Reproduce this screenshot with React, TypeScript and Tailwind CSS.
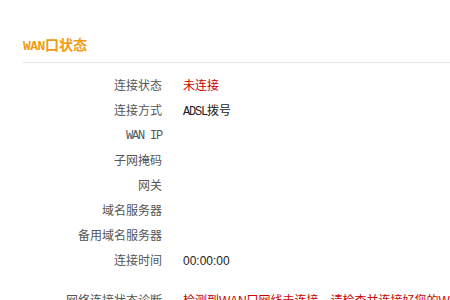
const rows: { label: string; value?: string; tone?: "red" | "dark"; monoLabel?: boolean }[] = [
  { label: "连接状态", value: "未连接", tone: "red" },
  { label: "连接方式", value: "ADSL拨号", tone: "dark" },
  { label: "WAN IP", monoLabel: true },
  { label: "子网掩码" },
  { label: "网关" },
  { label: "域名服务器" },
  { label: "备用域名服务器" },
  { label: "连接时间", value: "00:00:00", tone: "dark" },
];

const cjk = "font-['Liberation_Sans','Noto_Sans_CJK_SC',sans-serif]";

export default function App() {
  return (
    <div className={`h-[300px] w-[450px] overflow-hidden bg-white pl-[23px] pt-[36px] ${cjk}`}>
      <h2 className="text-[14px] font-bold leading-[18px] text-[#f19a12]">
        <span className="font-['Liberation_Mono',monospace] text-[13px] font-bold tracking-[-0.5px]">WAN</span>口状态
      </h2>
      <div className="mt-[6px] h-px bg-[#e2e2e2]" />

      <div className="mt-[11px] grid grid-cols-[139px_1fr] gap-x-[21px] text-[12px]">
        {rows.map((r) => (
          <div key={r.label} className="contents">
            <div
              className={`h-[25px] text-right leading-[25px] text-[#555] ${
                r.monoLabel ? "font-['Liberation_Mono',monospace] text-[12px] tracking-[-1.2px]" : ""
              }`}
            >
              {r.label}
            </div>
            <div
              className={`h-[25px] leading-[25px] ${
                r.tone === "red" ? "text-[#c00]" : "text-[#222]"
              }`}
            >
              {r.value === "ADSL拨号" ? (
                <>
                  <span className="font-['Liberation_Mono',monospace] text-[12px] tracking-[-1.2px]">ADSL</span>拨号
                </>
              ) : (
                r.value
              )}
            </div>
          </div>
        ))}
        <div className="mt-[15px] whitespace-nowrap text-right leading-[25px] text-[#555]">网络连接状态诊断</div>
        <div className="mt-[15px] whitespace-nowrap leading-[25px] text-[#c00]">
          检测到WAN口网线未连接，请检查并连接好您的WAN口网线
        </div>
      </div>
    </div>
  );
}
